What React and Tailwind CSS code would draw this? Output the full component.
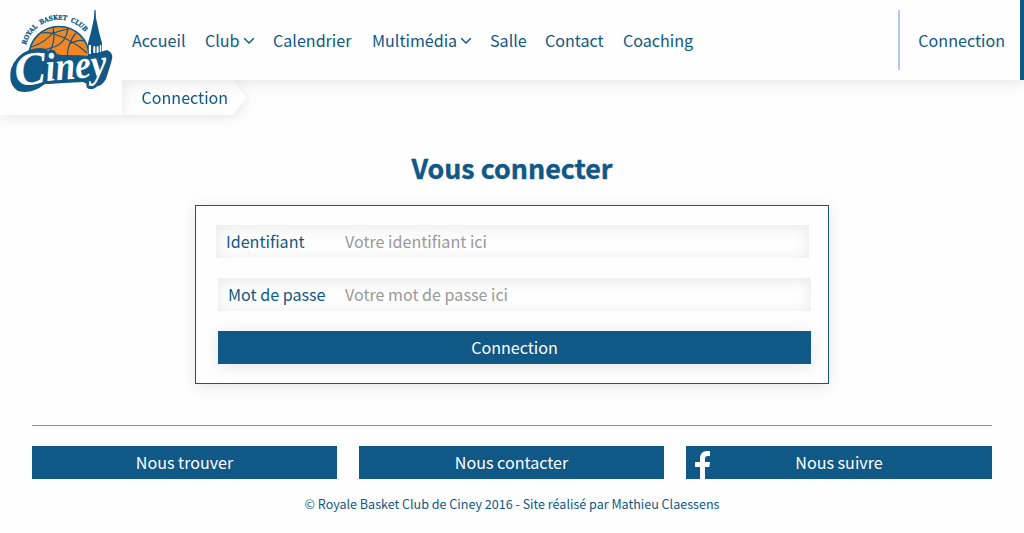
import React from "react";

const chevron = (
  <svg viewBox="0 0 12 8" className="mt-[2px] ml-[3px] h-[8px] w-[12px]" fill="none" stroke="#105885" strokeWidth="1.5">
    <path d="M1.2 1.2 6 6 10.8 1.2" />
  </svg>
);

const nav = [
  { label: "Accueil", pos: "w-[73px]" },
  { label: "Club", pos: "w-[68px]", menu: true },
  { label: "Calendrier", pos: "w-[99px]" },
  { label: "Multimédia", pos: "w-[118px]", menu: true },
  { label: "Salle", pos: "w-[55px]" },
  { label: "Contact", pos: "w-[78px]" },
  { label: "Coaching", pos: "w-[80px]" },
];

function Logo() {
  return (
    <svg viewBox="0 0 104 84" className="h-[84px] w-[104px] overflow-visible">
      <defs>
        <linearGradient id="ball" x1="0" y1="0" x2="1" y2="1">
          <stop offset="0" stopColor="#e98a2b" />
          <stop offset="1" stopColor="#f6821f" />
        </linearGradient>
        <path id="arc" d="M17 36A34 34 0 0 1 80 29" />
      </defs>
      <path d="M20 47A30 29.500 0 0 1 80 47Q80 52 77 58H23Q20 52 20 47Z" fill="url(#ball)" stroke="#105885" strokeWidth="1.600" />
      <g fill="none" stroke="#105885" strokeWidth="1.200">
        <path d="M22 38Q38 33 45 22M31 24Q39 23 45 25Q64 31 78 44M44 18.500Q48 38 34 50M59 19Q57 34 45 38Q33 41 23 45M67 24Q56 37 59 56M60 35Q70 30 75 32M45 24Q52 21 60 20" />
      </g>
      <text fill="#105885" stroke="#105885" strokeWidth="0.300" fontFamily="'DejaVu Serif', serif" fontWeight="bold" fontSize="6.500" wordSpacing="2">
        <textPath href="#arc" textLength="74" lengthAdjust="spacingAndGlyphs">ROYAL BASKET CLUB</textPath>
      </text>
      <g fill="#105885">
        <path d="M85.400 1h1.200l.4 8 3 14 3 11H79l3-11 3-14z" />
        <path d="M79 34h14v13H79z" />
      </g>
      <path d="M79.800 36h2.200v9h-2.200zM84.300 38q1-2 2 0v6h-2zM87.600 38q1-2 2 0v6h-2zM90.800 36h1.500v7h-1.500z" fill="#fff" />
      <path d="M20 41Q35 36 40 43L52 46Q72 46 78 47L98 41Q106 44 102 54L97 70Q91 81 80 76L74 73L36 75Q22 86 9 82Q-1 76 2 60Q7 46 20 41Z" fill="#105885" />
      <g transform="rotate(-5 50 65)" fill="#fff" stroke="#105885" strokeLinejoin="round" paintOrder="stroke" fontFamily="'Liberation Serif', serif" fontStyle="italic" fontWeight="bold">
        <text y="73" strokeWidth="5">
          <tspan x="6" fontSize="47" textLength="31" lengthAdjust="spacingAndGlyphs">C</tspan>
        </text>
        <text x="37" y="71" strokeWidth="6" fontSize="40" textLength="61" lengthAdjust="spacingAndGlyphs">iney</text>
      </g>
    </svg>
  );
}

function Field({ label, type, hint, pos, inputWidth }) {
  return (
    <label className={`flex h-[33px] w-[593px] items-center pl-[10px] shadow-[inset_0_2px_15px_rgba(0,0,0,0.09)] ${pos}`}>
      <span className="shrink-0 whitespace-nowrap">{label}</span>
      <input type={type} placeholder={hint} className={`ml-auto bg-transparent outline-none placeholder:text-[#999] ${inputWidth}`} />
    </label>
  );
}

export default function App() {
  return (
    <div className="h-[533px] w-[1024px] overflow-hidden bg-[#fefefe] font-['Noto_Sans_CJK_JP','Noto_Sans',sans-serif] text-[16.1px] leading-[33px] text-[#105885]">
      <header className="flex h-[115px] items-start">
        <div className="relative z-10 h-[115px] w-[122px] bg-[#fefefe] pt-[9px] pl-[9px] shadow-[0_2px_15px_rgba(0,0,0,0.1)]">
          <Logo />
        </div>
        <div className="flex w-[902px] flex-col">
          <div className="relative z-20 flex h-20 items-center border-r-4 border-[#105885] bg-[#fefefe] pl-[10px] shadow-[0_2px_15px_rgba(0,0,0,0.1)] [clip-path:inset(0_0_-30px_0)]">
            <nav className="flex">
              {nav.map((n) => (
                <a key={n.label} href="#" className={`flex items-center whitespace-nowrap ${n.pos}`}>
                  {n.label}
                  {n.menu && chevron}
                </a>
              ))}
            </nav>
            <a href="#" className="ml-auto flex h-[60px] items-center border-l-2 border-[#b0cbec] pr-[15px] pl-[18px]">Connection</a>
          </div>
          <div className="h-[35px] w-[126px] drop-shadow-[0_2px_6px_rgba(0,0,0,0.1)]">
            <div className="h-[35px] bg-[#fefefe] pl-[19.5px] leading-[35px] [clip-path:polygon(0_0,111px_0,125px_50%,111px_100%,0_100%)]">Connection</div>
          </div>
        </div>
      </header>
      <main className="flex flex-col items-center pt-[33px]">
        <h1 className="h-10 text-[26.8px] leading-10 font-bold [-webkit-text-stroke:0.4px_#105885]">Vous connecter</h1>
        <form className="mt-[17px] flex h-[179px] w-[634px] flex-col gap-5 border border-[#105885] pt-[19px] pl-[20px] shadow-[0_2px_15px_rgba(0,0,0,0.1)]">
          <Field label="Identifiant" type="text" hint="Votre identifiant ici" inputWidth="w-[464px]" />
          <Field label="Mot de passe" type="password" hint="Votre mot de passe ici" pos="ml-[2px]" inputWidth="w-[466px]" />
          <button type="button" className="ml-[2px] h-[33px] w-[593px] bg-[#105885] text-[#fefefe] shadow-[0_2px_15px_rgba(0,0,0,0.1)]">Connection</button>
        </form>
      </main>
      <footer className="mx-8 mt-[41px] border-t border-[#6495e0] pt-5 text-center">
        <div className="flex justify-between text-[#fefefe]">
          <a href="#" className="h-[33px] w-[305px] bg-[#105885]">Nous trouver</a>
          <a href="#" className="h-[33px] w-[305px] bg-[#105885]">Nous contacter</a>
          <a href="#" className="relative h-[33px] w-[306px] bg-[#105885]">
            <svg viewBox="0 0 16 28" className="absolute bottom-0 left-[9px] h-[28px] w-[16px]" fill="#fefefe">
              <path d="M5 28V16H0V11H5V8Q5 0 12 0H15V5H12.500Q10 5 10 7.500V11H15L14.300 16H10V28Z" />
            </svg>
            Nous suivre
          </a>
        </div>
        <p className="mt-[8px] text-[12.55px] leading-[33px]">© Royale Basket Club de Ciney 2016 - Site réalisé par Mathieu Claessens</p>
      </footer>
    </div>
  );
}
